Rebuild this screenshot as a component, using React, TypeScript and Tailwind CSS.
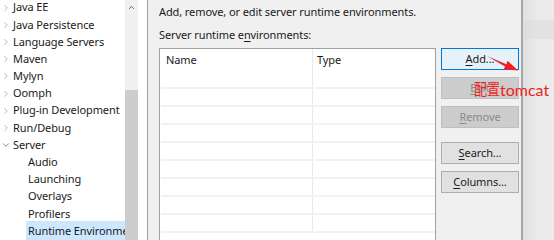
import { ChevronRight, ChevronDown, ChevronUp } from 'lucide-react';

interface TreeItem {
  label: string;
  depth: 0 | 1;
  state?: 'closed' | 'open';
  selected?: boolean;
}

const tree: TreeItem[] = [
  { label: 'Java EE', depth: 0, state: 'closed' },
  { label: 'Java Persistence', depth: 0, state: 'closed' },
  { label: 'Language Servers', depth: 0, state: 'closed' },
  { label: 'Maven', depth: 0, state: 'closed' },
  { label: 'Mylyn', depth: 0, state: 'closed' },
  { label: 'Oomph', depth: 0, state: 'closed' },
  { label: 'Plug-in Development', depth: 0, state: 'closed' },
  { label: 'Run/Debug', depth: 0, state: 'closed' },
  { label: 'Server', depth: 0, state: 'open' },
  { label: 'Audio', depth: 1 },
  { label: 'Launching', depth: 1 },
  { label: 'Overlays', depth: 1 },
  { label: 'Profilers', depth: 1 },
  { label: 'Runtime Environments', depth: 1, selected: true },
];

const font = { fontFamily: '"Noto Sans", "Noto Sans CJK SC", sans-serif' };

function WinButton({
  key1,
  post,
  variant = 'normal',
}: {
  key1: string;
  post: string;
  variant?: 'default' | 'normal' | 'disabled';
}) {
  const styles = {
    default: 'bg-[#e5f1fb] border-[#0078d7] text-[#1a1a1a]',
    normal: 'bg-[#e1e1e1] border-[#adadad] text-[#1a1a1a]',
    disabled: 'bg-[#cccccc] border-[#bfbfbf] text-[#8a8a8a]',
  }[variant];
  return (
    <div className={`flex h-[22px] w-[78px] items-center justify-center border text-[11px] ${styles}`}>
      <span className="underline underline-offset-2">{key1}</span>
      {post}
    </div>
  );
}

export default function App() {
  const rows = Array.from({ length: 9 });

  return (
    <div
      className="relative flex h-[240px] w-[554px] overflow-hidden bg-white tracking-[-0.1px] text-[#1a1a1a]"
      style={font}
    >
      {/* tree */}
      <div className="flex w-[148px] shrink-0 border-r border-[#a0a0a0] bg-white">
        <div className="-mt-[1px] w-[125px] overflow-hidden text-[11px]">
          {tree.map((item) => (
            <div
              key={item.label}
              className={`flex h-[17.2px] items-center whitespace-nowrap ${
                item.depth === 1 ? 'pl-[26px]' : 'pl-[1px]'
              }`}
            >
              {item.depth === 0 && (
                <span className="flex w-[12px] items-center text-[#8a8a8a]">
                  {item.state === 'open' ? (
                    <ChevronDown size={10} strokeWidth={1.5} className="text-[#404040]" />
                  ) : (
                    <ChevronRight size={10} strokeWidth={1.5} />
                  )}
                </span>
              )}
              <span
                className={`${
                  item.selected ? 'h-[20px] flex-1 bg-[#cce8ff] pl-[2px] leading-[20px]' : ''
                } ${item.depth === 1 && !item.selected ? 'pl-[2px]' : ''}`}
              >
                {item.label}
              </span>
            </div>
          ))}
        </div>
        <div className="flex w-[13px] flex-col bg-[#f0f0f0]">
          <div className="flex h-[14px] items-center justify-center text-[#606060]">
            <ChevronUp size={9} strokeWidth={2.5} />
          </div>
          <div className="h-[76px]" />
          <div className="flex-1 bg-[#cdcdcd]" />
        </div>
      </div>

      {/* page */}
      <div className="flex w-[375px] shrink-0 flex-col border-r-2 border-[#a8a8a8] bg-[#f0f0f0] pl-[11px] text-[11px]">
        <div className="mt-[3px] h-[18px] leading-[18px]">Add, remove, or edit server runtime environments.</div>
        <div className="mt-[5px] h-[18px] leading-[18px]">
          Server runtime e<span className="underline underline-offset-2">n</span>vironments:
        </div>
        <div className="mt-[4px] flex gap-[5px]">
          <div className="h-[200px] w-[277px] border border-[#a0a0a0] bg-white">
            <div className="flex h-[22px] items-center">
              <div className="w-[153px] border-r border-[#e5eaf2] pl-[6px] leading-[22px]">Name</div>
              <div className="pl-[4px]">Type</div>
            </div>
            {rows.map((_, i) => (
              <div key={i} className="ml-[1px] flex h-[18px] border-b-2 border-[#f2f2f2]">
                <div className="w-[152px] border-r border-[#e5eaf2]" />
              </div>
            ))}
          </div>
          <div className="flex flex-col">
            <WinButton key1="A" post="dd..." variant="default" />
            <div className="h-[7px]" />
            <WinButton key1="E" post="dit" variant="disabled" />
            <div className="h-[7px]" />
            <WinButton key1="R" post="emove" variant="disabled" />
            <div className="h-[14px]" />
            <WinButton key1="S" post="earch..." />
            <div className="h-[7px]" />
            <WinButton key1="C" post="olumns..." />
          </div>
        </div>
      </div>

      {/* window behind */}
      <div className="flex flex-1 flex-col bg-gradient-to-r from-[#e0e0e0] via-[#ebebeb] to-[#ececec]">
        <div className="h-[20px]" />
        <div className="h-[19px] bg-[#dcdcdc]/60" />
      </div>

      {/* annotation */}
      <svg className="absolute left-0 top-0" width="554" height="240" viewBox="0 0 554 240">
        <polygon
          points="487,56 506.4,64.2 507.6,60.8 518,70.5 503.8,69.2 505,66.4"
          fill="#f01e1e"
        />
      </svg>
      <div className="absolute left-[474px] top-[80px] flex items-baseline leading-[20px] tracking-normal text-[#f01e1e]">
        <span
          className="inline-block origin-bottom scale-y-[1.2] text-[13px]"
          style={{ fontFamily: '"Noto Sans CJK SC", sans-serif' }}
        >
          配置
        </span>
        <span className="text-[16px]" style={{ fontFamily: 'Lato, sans-serif' }}>
          tomcat
        </span>
      </div>
    </div>
  );
}
